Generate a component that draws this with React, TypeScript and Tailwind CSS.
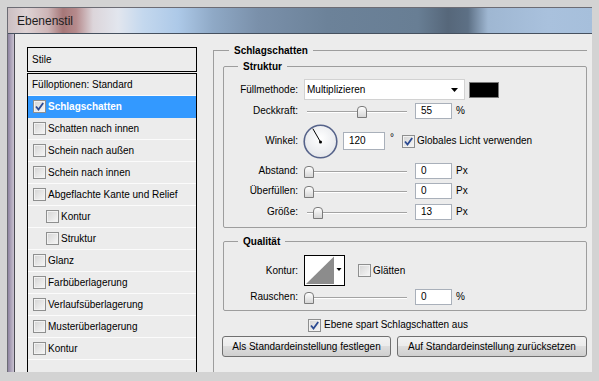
import React from 'react';

const STYLES = [
  { label: 'Schlagschatten', checked: true, active: true },
  { label: 'Schatten nach innen' },
  { label: 'Schein nach außen' },
  { label: 'Schein nach innen' },
  { label: 'Abgeflachte Kante und Relief' },
  { label: 'Kontur', indent: true },
  { label: 'Struktur', indent: true },
  { label: 'Glanz' },
  { label: 'Farbüberlagerung' },
  { label: 'Verlaufsüberlagerung' },
  { label: 'Musterüberlagerung' },
  { label: 'Kontur' },
];

function Checkbox({ checked }: { checked?: boolean }) {
  return (
    <span className="flex h-[13px] w-[13px] shrink-0 items-center justify-center border border-[#8e8f8f] bg-[linear-gradient(135deg,#d4d4d4,#f7f7f7)] shadow-[inset_0_0_0_1px_#f2f2f2]">
      {checked && (
        <svg width="11" height="11" viewBox="0 0 11 11">
          <path d="M2 5.5 L4.5 8.5 L9.2 2" fill="none" stroke="#2b4a92" strokeWidth="1.8" />
        </svg>
      )}
    </span>
  );
}

function NumBox({ value, size = 'h-[16px] w-[37px]' }: { value: string; size?: string }) {
  return (
    <div className={`flex items-center border border-[#a9b0ba] bg-white pl-[5px] ${size}`}>{value}</div>
  );
}

// thumb offset is given as a full class name (left-[..px])
function Slider({ thumb }: { thumb: string }) {
  return (
    <div className="relative ml-[6px] h-[14px] w-[104px] shrink-0">
      <div className="absolute left-[3px] right-[1px] top-[7px] h-[2px] border-t border-[#a3a3a3] bg-white" />
      <div
        className={`absolute top-[2px] h-[12px] w-[10px] rounded-t-[4px] border border-[#7b7b7b] bg-[linear-gradient(#fefefe,#d6d6d6)] ${thumb}`}
      />
    </div>
  );
}

function Label({ children }: { children: React.ReactNode }) {
  return <div className="w-[74px] shrink-0 text-right">{children}</div>;
}

function SliderRow({ label, thumb, value, unit, h }: { label: string; thumb: string; value: string; unit: string; h: string }) {
  return (
    <div className={`flex items-center ${h}`}>
      <Label>{label}</Label>
      <Slider thumb={thumb} />
      <div className="ml-[7px]">
        <NumBox value={value} />
      </div>
      <span className="ml-[4px]">{unit}</span>
    </div>
  );
}

function Group({ title, className, children }: { title: string; className: string; children: React.ReactNode }) {
  return (
    <div className={`flex flex-col rounded-[2px] border border-[#9d9d9d] ${className}`}>
      <div className="-mt-[7px] ml-[14px] w-fit bg-[#ececec] px-[5px] font-bold leading-[13px]">{title}</div>
      {children}
    </div>
  );
}

function Dial() {
  return (
    <svg width="35" height="35" viewBox="0 0 35 35" className="ml-[5px] shrink-0">
      <defs>
        <radialGradient id="dialFill" cx="50%" cy="40%" r="60%">
          <stop offset="0%" stopColor="#ffffff" />
          <stop offset="100%" stopColor="#e4e6ea" />
        </radialGradient>
      </defs>
      <circle cx="17.5" cy="17.5" r="16.3" fill="url(#dialFill)" stroke="#56638a" strokeWidth="1.6" />
      <line x1="17.5" y1="18" x2="9.8" y2="4.6" stroke="#000" strokeWidth="1" />
      <circle cx="17.5" cy="18" r="1.5" fill="#000" />
    </svg>
  );
}

function ContourPicker() {
  return (
    <svg width="41" height="31" viewBox="0 0 41 31" className="ml-[6px] shrink-0">
      <rect x="0.5" y="0.5" width="40" height="30" fill="#fff" stroke="#000" />
      <polygon points="2,29 30,1.5 30,29" fill="#8c8c8c" />
      <polygon points="32.5,13 37.5,13 35,16" fill="#000" />
    </svg>
  );
}

function Button({ children, w }: { children: React.ReactNode; w: string }) {
  return (
    <button
      type="button"
      className={`flex h-[21px] items-center justify-center rounded-[3px] border border-[#707070] bg-[linear-gradient(#f2f2f2,#ebebeb_50%,#dddddd_50%,#cfcfcf)] ${w}`}
    >
      {children}
    </button>
  );
}

function LeftList() {
  return (
    <div className="flex w-[170px] shrink-0 flex-col">
      <div className="flex h-[25px] items-center border border-black pl-[4px]">Stile</div>
      <div className="mt-[1px] flex-1 border-x border-t border-black">
        <div className="flex h-[22px] items-center border-b border-[#fbfbfb] pl-[4px]">Fülloptionen: Standard</div>
        {STYLES.map((s, i) => (
          <div
            key={i}
            className={`flex h-[22px] items-center gap-[2px] border-b ${
              s.active ? 'border-[#3399ff] bg-[#3399ff] font-bold text-white' : 'border-[#fbfbfb]'
            } ${s.indent ? 'pl-[18px]' : 'pl-[5px]'}`}
          >
            <Checkbox checked={s.checked} />
            <span>{s.label}</span>
          </div>
        ))}
      </div>
    </div>
  );
}

function RightPanel() {
  return (
    <div className="ml-[16px] flex flex-1 flex-col pt-[3px]">
      <div className="flex flex-1 flex-col border-l border-t border-[#9d9d9d]">
        <div className="-mt-[7px] ml-[15px] w-fit bg-[#ececec] px-[5px] font-bold leading-[13px]">Schlagschatten</div>

        <Group title="Struktur" className="ml-[9px] mt-[9px] pb-[3px]">
          <div className="mt-[6px] flex h-[21px] items-center">
            <Label>Füllmethode:</Label>
            <div className="relative ml-[6px] flex h-[21px] w-[161px] items-center border border-[#d2d2d2] bg-white pl-[2px]">
              Multiplizieren
              <svg width="7" height="4" viewBox="0 0 7 4" className="absolute right-[6px] top-[8px]">
                <polygon points="0,0 7,0 3.5,4" fill="#000" />
              </svg>
            </div>
            <div className="ml-[4px] h-[16px] w-[30px] border border-[#7a7a7a] bg-black" />
          </div>
          <SliderRow label="Deckkraft:" thumb="left-[53px]" value="55" unit="%" h="h-[22px]" />
          <div className="flex h-[38px] items-center">
            <Label>Winkel:</Label>
            <Dial />
            <div className="ml-[5px]">
              <NumBox value="120" size="h-[18px] w-[42px]" />
            </div>
            <span className="ml-[5px] -mt-[6px]">°</span>
            <div className="ml-[8px]">
              <Checkbox checked />
            </div>
            <span className="ml-[2px]">Globales Licht verwenden</span>
          </div>
          <SliderRow label="Abstand:" thumb="left-[0px]" value="0" unit="Px" h="h-[22px]" />
          <SliderRow label="Überfüllen:" thumb="left-[0px]" value="0" unit="Px" h="h-[18px]" />
          <SliderRow label="Größe:" thumb="left-[9px]" value="13" unit="Px" h="h-[24px]" />
        </Group>

        <Group title="Qualität" className="ml-[9px] mt-[13px] pb-[3px]">
          <div className="mt-[7px] flex h-[31px] items-center">
            <Label>Kontur:</Label>
            <ContourPicker />
            <div className="ml-[13px]">
              <Checkbox />
            </div>
            <span className="ml-[2px]">Glätten</span>
          </div>
          <div className="mt-[1px]">
            <SliderRow label="Rauschen:" thumb="left-[0px]" value="0" unit="%" h="h-[20px]" />
          </div>
        </Group>

        <div className="mt-[4px] flex h-[20px] items-center gap-[3px] pl-[94px]">
          <Checkbox checked />
          <span>Ebene spart Schlagschatten aus</span>
        </div>

        <div className="mt-[1px] flex gap-[6px] pl-[8px]">
          <Button w="w-[169px]">Als Standardeinstellung festlegen</Button>
          <Button w="w-[190px]">Auf Standardeinstellung zurücksetzen</Button>
        </div>
      </div>
    </div>
  );
}

export default function App() {
  return (
    <div className="flex h-[381px] w-[599px] flex-col bg-[#d3d3d3] pb-[9px] pl-[7px] pr-[7px] pt-[7px] font-['Liberation_Sans',Arial,sans-serif] text-[10px] leading-[12px] text-black">
      <div className="flex min-h-0 flex-1 flex-col overflow-hidden border-l border-t border-[#6c6c74]">
        <div className="flex h-[25px] shrink-0 items-center bg-[linear-gradient(90deg,#cbbfc2_0px,#ded3d5_18px,#cdb5b7_40px,#a67778_55px,#b58a8c_68px,#dcd5da_85px,#e2e6ee_110px,#c4d8ee_135px,#adc9e8_170px,#8fa9c6_205px,#7a90aa_250px,#6c8299_320px,#687e94_410px,#56677a_440px,#5d7085_460px,#9fb7d2_480px,#a9c1dd_540px,#a6bfdb_585px)] pl-[9px] text-[12px] text-[#1c1c1c]">
          Ebenenstil
        </div>
        <div className="flex min-h-0 flex-1 border-t border-[#46515f]">
          <div className="w-[7px] shrink-0 border-r border-[#4a4a52] bg-[linear-gradient(90deg,#8f84a0,#c9c2d1)]" />
          <div className="flex min-h-0 flex-1 bg-[#ececec] pl-[12px] pr-[5px] pt-[13px]">
            <LeftList />
            <RightPanel />
          </div>
        </div>
      </div>
    </div>
  );
}
